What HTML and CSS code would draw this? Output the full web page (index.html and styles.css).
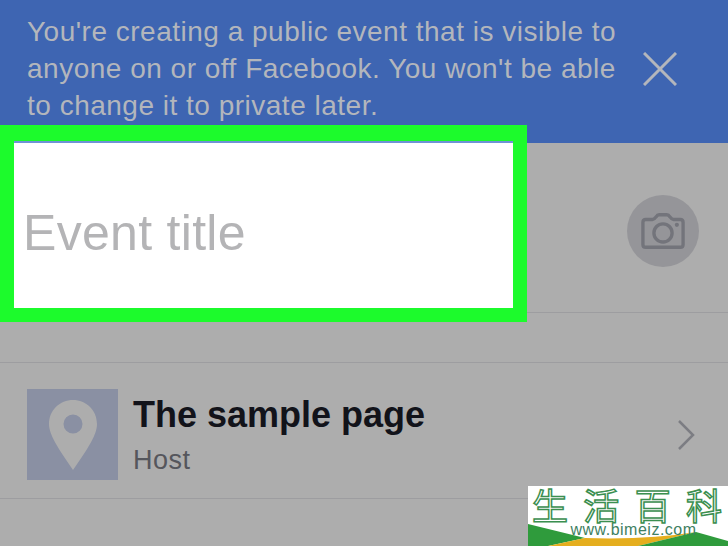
FILE: index.html
```html
<!DOCTYPE html>
<html lang="en">
<head>
    <title>Create event</title>
    <meta charset="UTF-8">
    <link rel="stylesheet" href="styles.css">
</head>
<body>
    <div class="banner">
        <div class="banner-text">You're creating a public event that is visible to<br>anyone on or off Facebook. You won't be able<br>to change it to private later.</div>
        <svg class="close-icon" viewBox="0 0 34 34">
            <path d="M1 1L33 33M33 1L1 33" stroke="#b3b6bc" stroke-width="3" fill="none"/>
        </svg>
    </div>
    <div class="title-row">
        <!-- Green highlight over the title field -->
        <div class="highlight">
            <div class="title-field">Event title</div>
        </div>
        <div class="camera-button">
            <svg class="camera-icon" viewBox="0 0 46 40">
                <path d="M5 8H12Q14 8 15 6L16 5Q17 3 19 3H27Q29 3 30 5L31 6Q32 8 34 8H41Q44 8 44 11V34Q44 37 41 37H5Q2 37 2 34V11Q2 8 5 8Z" stroke="#73747b" stroke-width="3.500" fill="none" stroke-linejoin="round"/>
                <circle cx="23" cy="22" r="9.500" stroke="#73747b" stroke-width="3.500" fill="none"/>
                <circle cx="37.500" cy="13.500" r="2.200" fill="#73747b"/>
            </svg>
        </div>
    </div>
    <div class="spacer"></div>
    <div class="host-row">
        <div class="host-thumb">
            <svg class="pin-icon" viewBox="0 0 48 70">
                <path fill-rule="evenodd" d="M24 0C37 0 48 10 48 24C48 34 40 47 24 70C8 47 0 34 0 24C0 10 11 0 24 0ZM24 14.500A9.500 9.500 0 1 0 24 33.500A9.500 9.500 0 1 0 24 14.500Z" fill="#adadad"/>
            </svg>
        </div>
        <div class="host-info">
            <div class="host-name">The sample page</div>
            <div class="host-label">Host</div>
        </div>
        <svg class="chevron-icon" viewBox="0 0 18 32">
            <path d="M2 2L16 16L2 30" stroke="#7c7d83" stroke-width="2.500" fill="none"/>
        </svg>
    </div>

    <!-- Watermark -->
    <div class="watermark">
        <svg class="watermark-swoosh" viewBox="0 0 200 24" preserveAspectRatio="none">
            <path d="M0 2L57 16L20 24H0Z" fill="#2f9b3c"/>
            <path d="M20 24L57 16Q120 18 168 10L110 24Z" fill="#e5ae1e"/>
            <path d="M110 24L168 10L200 19V24Z" fill="#2f9b3c"/>
        </svg>
        <div class="watermark-title"><span>生</span><span>活</span><span>百</span><span>科</span></div>
        <div class="watermark-url">www.bimeiz.com</div>
    </div>
</body>
</html>
```

FILE: styles.css
```css
html, body {
    height: 100%;
    margin: 0;
    font-family: "Liberation Sans", Arial, sans-serif;
    background-color: #adadad;
    overflow: hidden;
}
.banner {
    background-color: #3e65b2;
    height: 143px;
    box-sizing: border-box;
    padding: 13px 51px 0 27px;
    display: flex;
    justify-content: space-between;
    color: #b3b6bc;
    font-size: 28px;
    line-height: 37px;
    letter-spacing: 0.5px;
}
.close-icon {
    width: 34px;
    height: 34px;
    margin-top: 39px;
    flex-shrink: 0;
}
.title-row {
    height: 170px;
    box-sizing: border-box;
    border-bottom: 1px solid #9d9da0;
    position: relative;
    display: flex;
    align-items: center;
    justify-content: flex-end;
    padding: 7px 29px 0 0;
}
.highlight {
    position: absolute;
    top: -18px;
    left: 0;
    width: 527px;
    height: 197px;
    box-sizing: border-box;
    background-color: #1cfb2c;
    padding: 16px 14px 14px;
    display: flex;
}
.title-field {
    flex: 1;
    background-color: #ffffff;
    border-top: 2px solid #6f93d6;
    color: #b4b4b6;
    font-size: 50px;
    letter-spacing: 0.3px;
    padding: 14px 9px 0;
    display: flex;
    align-items: center;
}
.camera-button {
    width: 72px;
    height: 72px;
    border-radius: 50%;
    background-color: #959599;
    display: flex;
    align-items: center;
    justify-content: center;
}
.camera-icon {
    width: 44px;
    height: 40px;
}
.spacer {
    height: 50px;
    box-sizing: border-box;
    border-bottom: 1px solid #9d9da0;
}
.host-row {
    height: 136px;
    box-sizing: border-box;
    border-bottom: 1px solid #9d9da0;
    display: flex;
    align-items: center;
    padding: 8px 33px 0 27px;
}
.host-thumb {
    width: 91px;
    height: 91px;
    background-color: #8a90a3;
    display: flex;
    align-items: center;
    justify-content: center;
}
.pin-icon {
    width: 48px;
    height: 70px;
}
.host-info {
    flex: 1;
    margin-left: 15px;
}
.host-name {
    color: #12131a;
    font-size: 36px;
    font-weight: bold;
    line-height: 44px;
    margin-bottom: 6px;
}
.host-label {
    color: #55565c;
    font-size: 27px;
    line-height: 34px;
    letter-spacing: 0.5px;
}
.chevron-icon {
    width: 18px;
    height: 32px;
}
.watermark {
    position: absolute;
    right: 0;
    bottom: 0;
    width: 200px;
    height: 60px;
    background-color: #ffffff;
}
.watermark-title {
    font-family: "Noto Sans CJK SC", sans-serif;
    font-size: 36px;
    line-height: 36px;
    display: flex;
    justify-content: space-between;
    padding: 0 6px 0 4px;
    color: #ffffff;
    -webkit-text-stroke: 1.5px #3b8f50;
}
.watermark-url {
    color: #3f7f62;
    font-size: 16px;
    line-height: 16px;
    letter-spacing: 0.5px;
    text-align: center;
    position: relative;
    padding-left: 11px;
}
.watermark-swoosh {
    position: absolute;
    left: 0;
    bottom: 0;
    width: 200px;
    height: 24px;
}
```
